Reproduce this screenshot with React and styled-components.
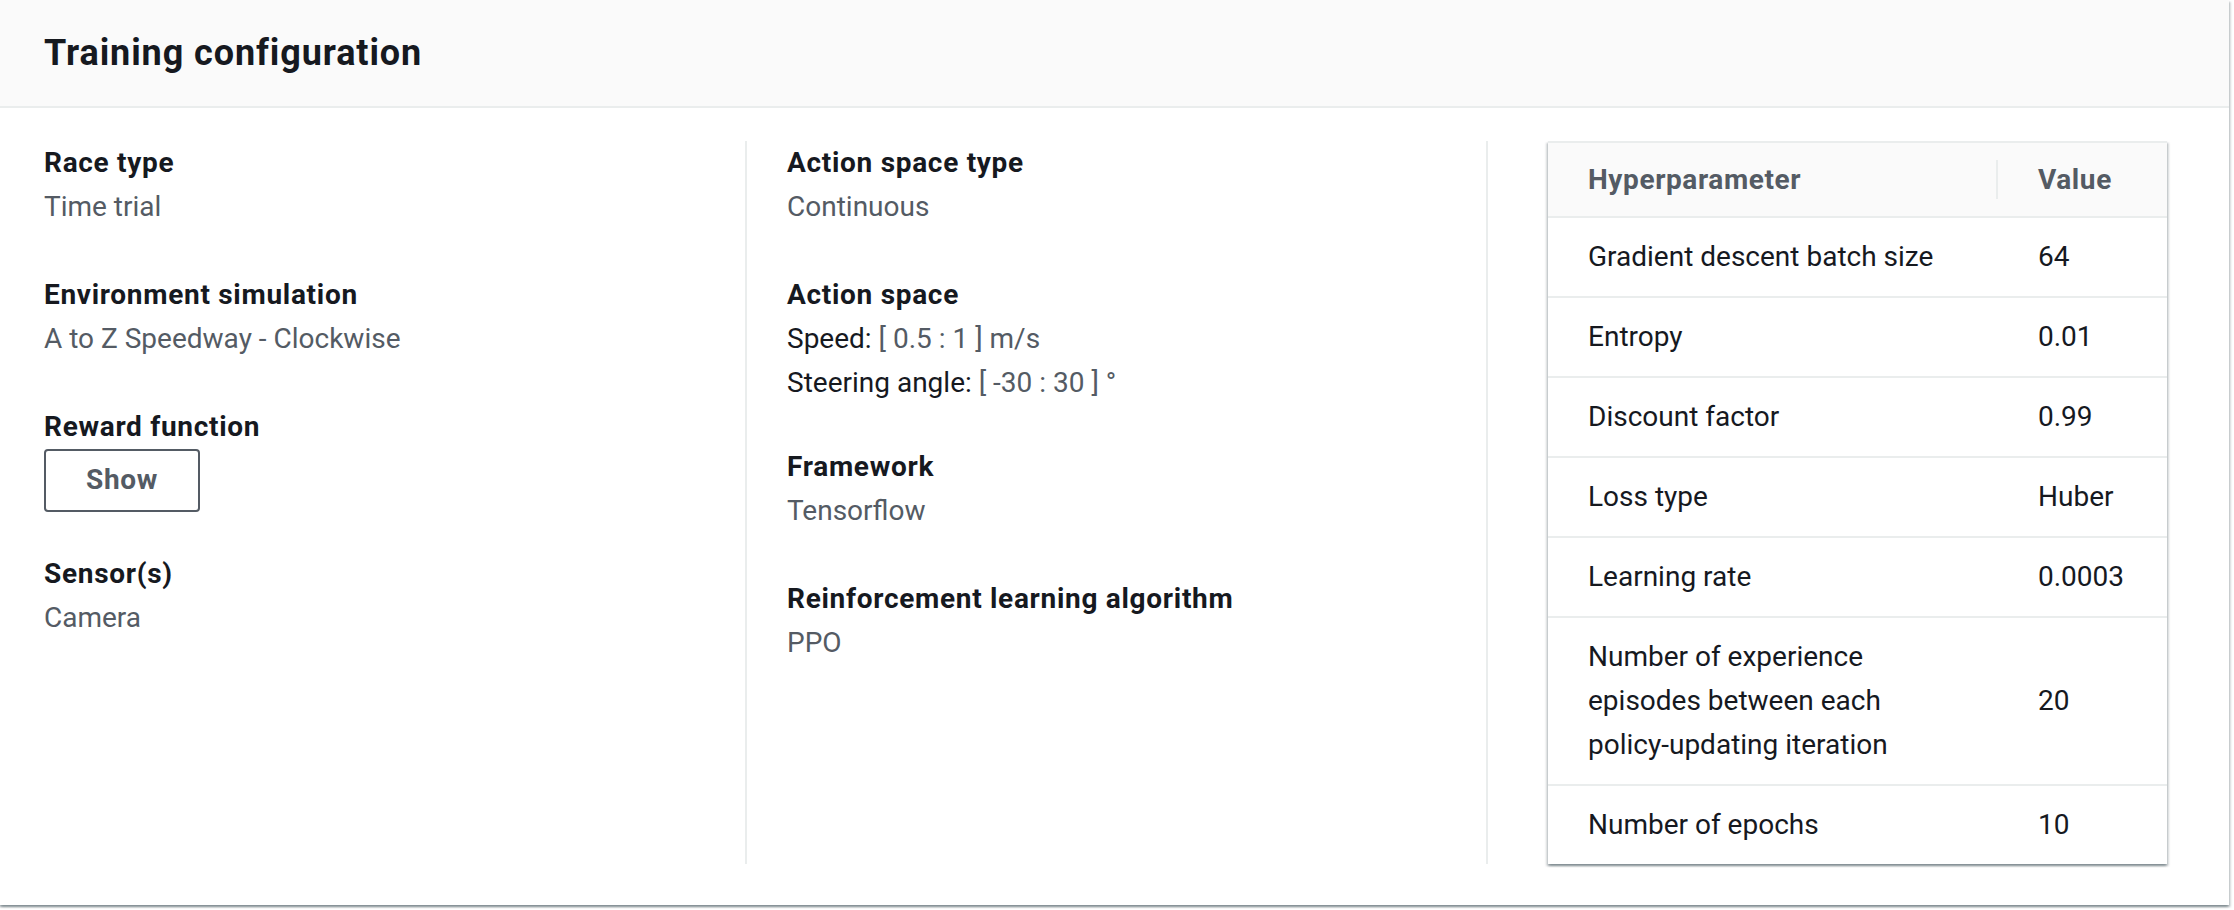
import React from "react";
import styled, { createGlobalStyle } from "styled-components";

const TEXT = "#16191f";
const MUTED = "#545b64";
const LINE = "#eaeded";

const GlobalStyle = createGlobalStyle`
  body {
    margin: 0;
    background: #ffffff;
    font-family: Roboto, "Open Sans", "Liberation Sans", sans-serif;
    color: ${TEXT};
  }
`;

const fields = [
  [
    { label: "Race type", value: "Time trial" },
    { label: "Environment simulation", value: "A to Z Speedway - Clockwise" },
    { label: "Reward function", button: "Show" },
    { label: "Sensor(s)", value: "Camera" },
  ],
  [
    { label: "Action space type", value: "Continuous" },
    {
      label: "Action space",
      ranges: [
        { name: "Speed:", value: "[ 0.5 : 1 ] m/s" },
        { name: "Steering angle:", value: "[ -30 : 30 ] °" },
      ],
    },
    { label: "Framework", value: "Tensorflow" },
    { label: "Reinforcement learning algorithm", value: "PPO" },
  ],
];

const hyperparameters = [
  { name: ["Gradient descent batch size"], value: "64" },
  { name: ["Entropy"], value: "0.01" },
  { name: ["Discount factor"], value: "0.99" },
  { name: ["Loss type"], value: "Huber" },
  { name: ["Learning rate"], value: "0.0003" },
  {
    name: [
      "Number of experience",
      "episodes between each",
      "policy-updating iteration",
    ],
    value: "20",
  },
  { name: ["Number of epochs"], value: "10" },
];

function App() {
  return (
    <Page>
      <GlobalStyle />
      <Card>
        <Header>
          <Title>Training configuration</Title>
        </Header>
        <Body>
          {fields.map((column, i) => (
            <Column key={i} $first={i === 0}>
              {column.map((f) => (
                <Field key={f.label} $tight={Boolean(f.ranges || f.button)}>
                  <Label>{f.label}</Label>
                  {f.value && <Value>{f.value}</Value>}
                  {f.button && <Button>{f.button}</Button>}
                  {f.ranges &&
                    f.ranges.map((r) => (
                      <RangeLine key={r.name}>
                        {r.name} <Value as="span">{r.value}</Value>
                      </RangeLine>
                    ))}
                </Field>
              ))}
            </Column>
          ))}
          <Column>
            <TableBox>
              <Table>
                <thead>
                  <tr>
                    <HeadCell $divider>Hyperparameter</HeadCell>
                    <HeadCell>Value</HeadCell>
                  </tr>
                </thead>
                <tbody>
                  {hyperparameters.map((h) => (
                    <Row key={h.value}>
                      <NameCell>
                        {h.name.map((line) => (
                          <div key={line}>{line}</div>
                        ))}
                      </NameCell>
                      <Cell>{h.value}</Cell>
                    </Row>
                  ))}
                </tbody>
              </Table>
            </TableBox>
          </Column>
        </Body>
      </Card>
    </Page>
  );
}

const Page = styled.div`
  padding: 0 5px 4px 0;
`;

const Card = styled.section`
  background: #ffffff;
  box-shadow: 0 2px 2px 0 rgba(0, 28, 36, 0.3),
    2px 2px 2px 0 rgba(0, 28, 36, 0.15), -2px 2px 2px 0 rgba(0, 28, 36, 0.15);
`;

const Header = styled.header`
  height: 106px;
  display: flex;
  align-items: center;
  padding: 0 44px;
  background: #fafafa;
  border-bottom: 2px solid ${LINE};
`;

const Title = styled.h2`
  margin: 0;
  font-size: 36px;
  line-height: 44px;
  font-weight: 700;
  letter-spacing: 0.9px;
  color: ${TEXT};
`;

const Body = styled.div`
  display: grid;
  grid-template-columns: repeat(3, 1fr);
  padding: 33px 2px 41px 4px;
`;

const Column = styled.div`
  display: flex;
  flex-direction: column;
  gap: 44px;
  padding: 0 40px 0 ${(p) => (p.$first ? "38px" : "40px")};
  border-left: 2px solid ${(p) => (p.$first ? "transparent" : LINE)};
`;

const Field = styled.div`
  display: flex;
  flex-direction: column;
  align-items: flex-start;
  font-size: 28px;
  line-height: 44px;
  margin-bottom: ${(p) => (p.$tight ? "-4px" : "0")};
`;

const Label = styled.div`
  font-weight: 700;
  letter-spacing: 0.7px;
  color: ${TEXT};
`;

const Value = styled.div`
  color: ${MUTED};
`;

const RangeLine = styled.div`
  color: ${TEXT};
`;

const Button = styled.button`
  font-family: inherit;
  font-size: 28px;
  line-height: 44px;
  font-weight: 700;
  letter-spacing: 0.7px;
  color: ${MUTED};
  background: #ffffff;
  border: 2px solid ${MUTED};
  border-radius: 4px;
  padding: 7px 40px 8px;
`;

const TableBox = styled.div`
  margin: 0 20px;
  background: #ffffff;
  box-shadow: 0 2px 2px 0 rgba(0, 28, 36, 0.3),
    2px 2px 2px 0 rgba(0, 28, 36, 0.15), -2px 2px 2px 0 rgba(0, 28, 36, 0.15);
  border-top: 2px solid ${LINE};
`;

const Table = styled.table`
  width: 100%;
  border-collapse: collapse;
  font-size: 28px;
  line-height: 44px;
`;

const HeadCell = styled.th`
  position: relative;
  text-align: left;
  font-weight: 700;
  letter-spacing: 0.6px;
  color: ${MUTED};
  background: #fafafa;
  padding: 15px 40px 14px;
  border-bottom: 2px solid ${LINE};
  width: ${(p) => (p.$divider ? "370px" : "auto")};

  &::after {
    content: "";
    display: ${(p) => (p.$divider ? "block" : "none")};
    position: absolute;
    right: 0;
    top: 17px;
    bottom: 17px;
    width: 2px;
    background: ${LINE};
  }
`;

const Row = styled.tr`
  & + & td {
    border-top: 2px solid ${LINE};
  }
`;

const Cell = styled.td`
  padding: 17px 40px;
  color: ${TEXT};
  vertical-align: middle;
`;

const NameCell = styled(Cell)`
  padding-right: 20px;
`;

export default App;
